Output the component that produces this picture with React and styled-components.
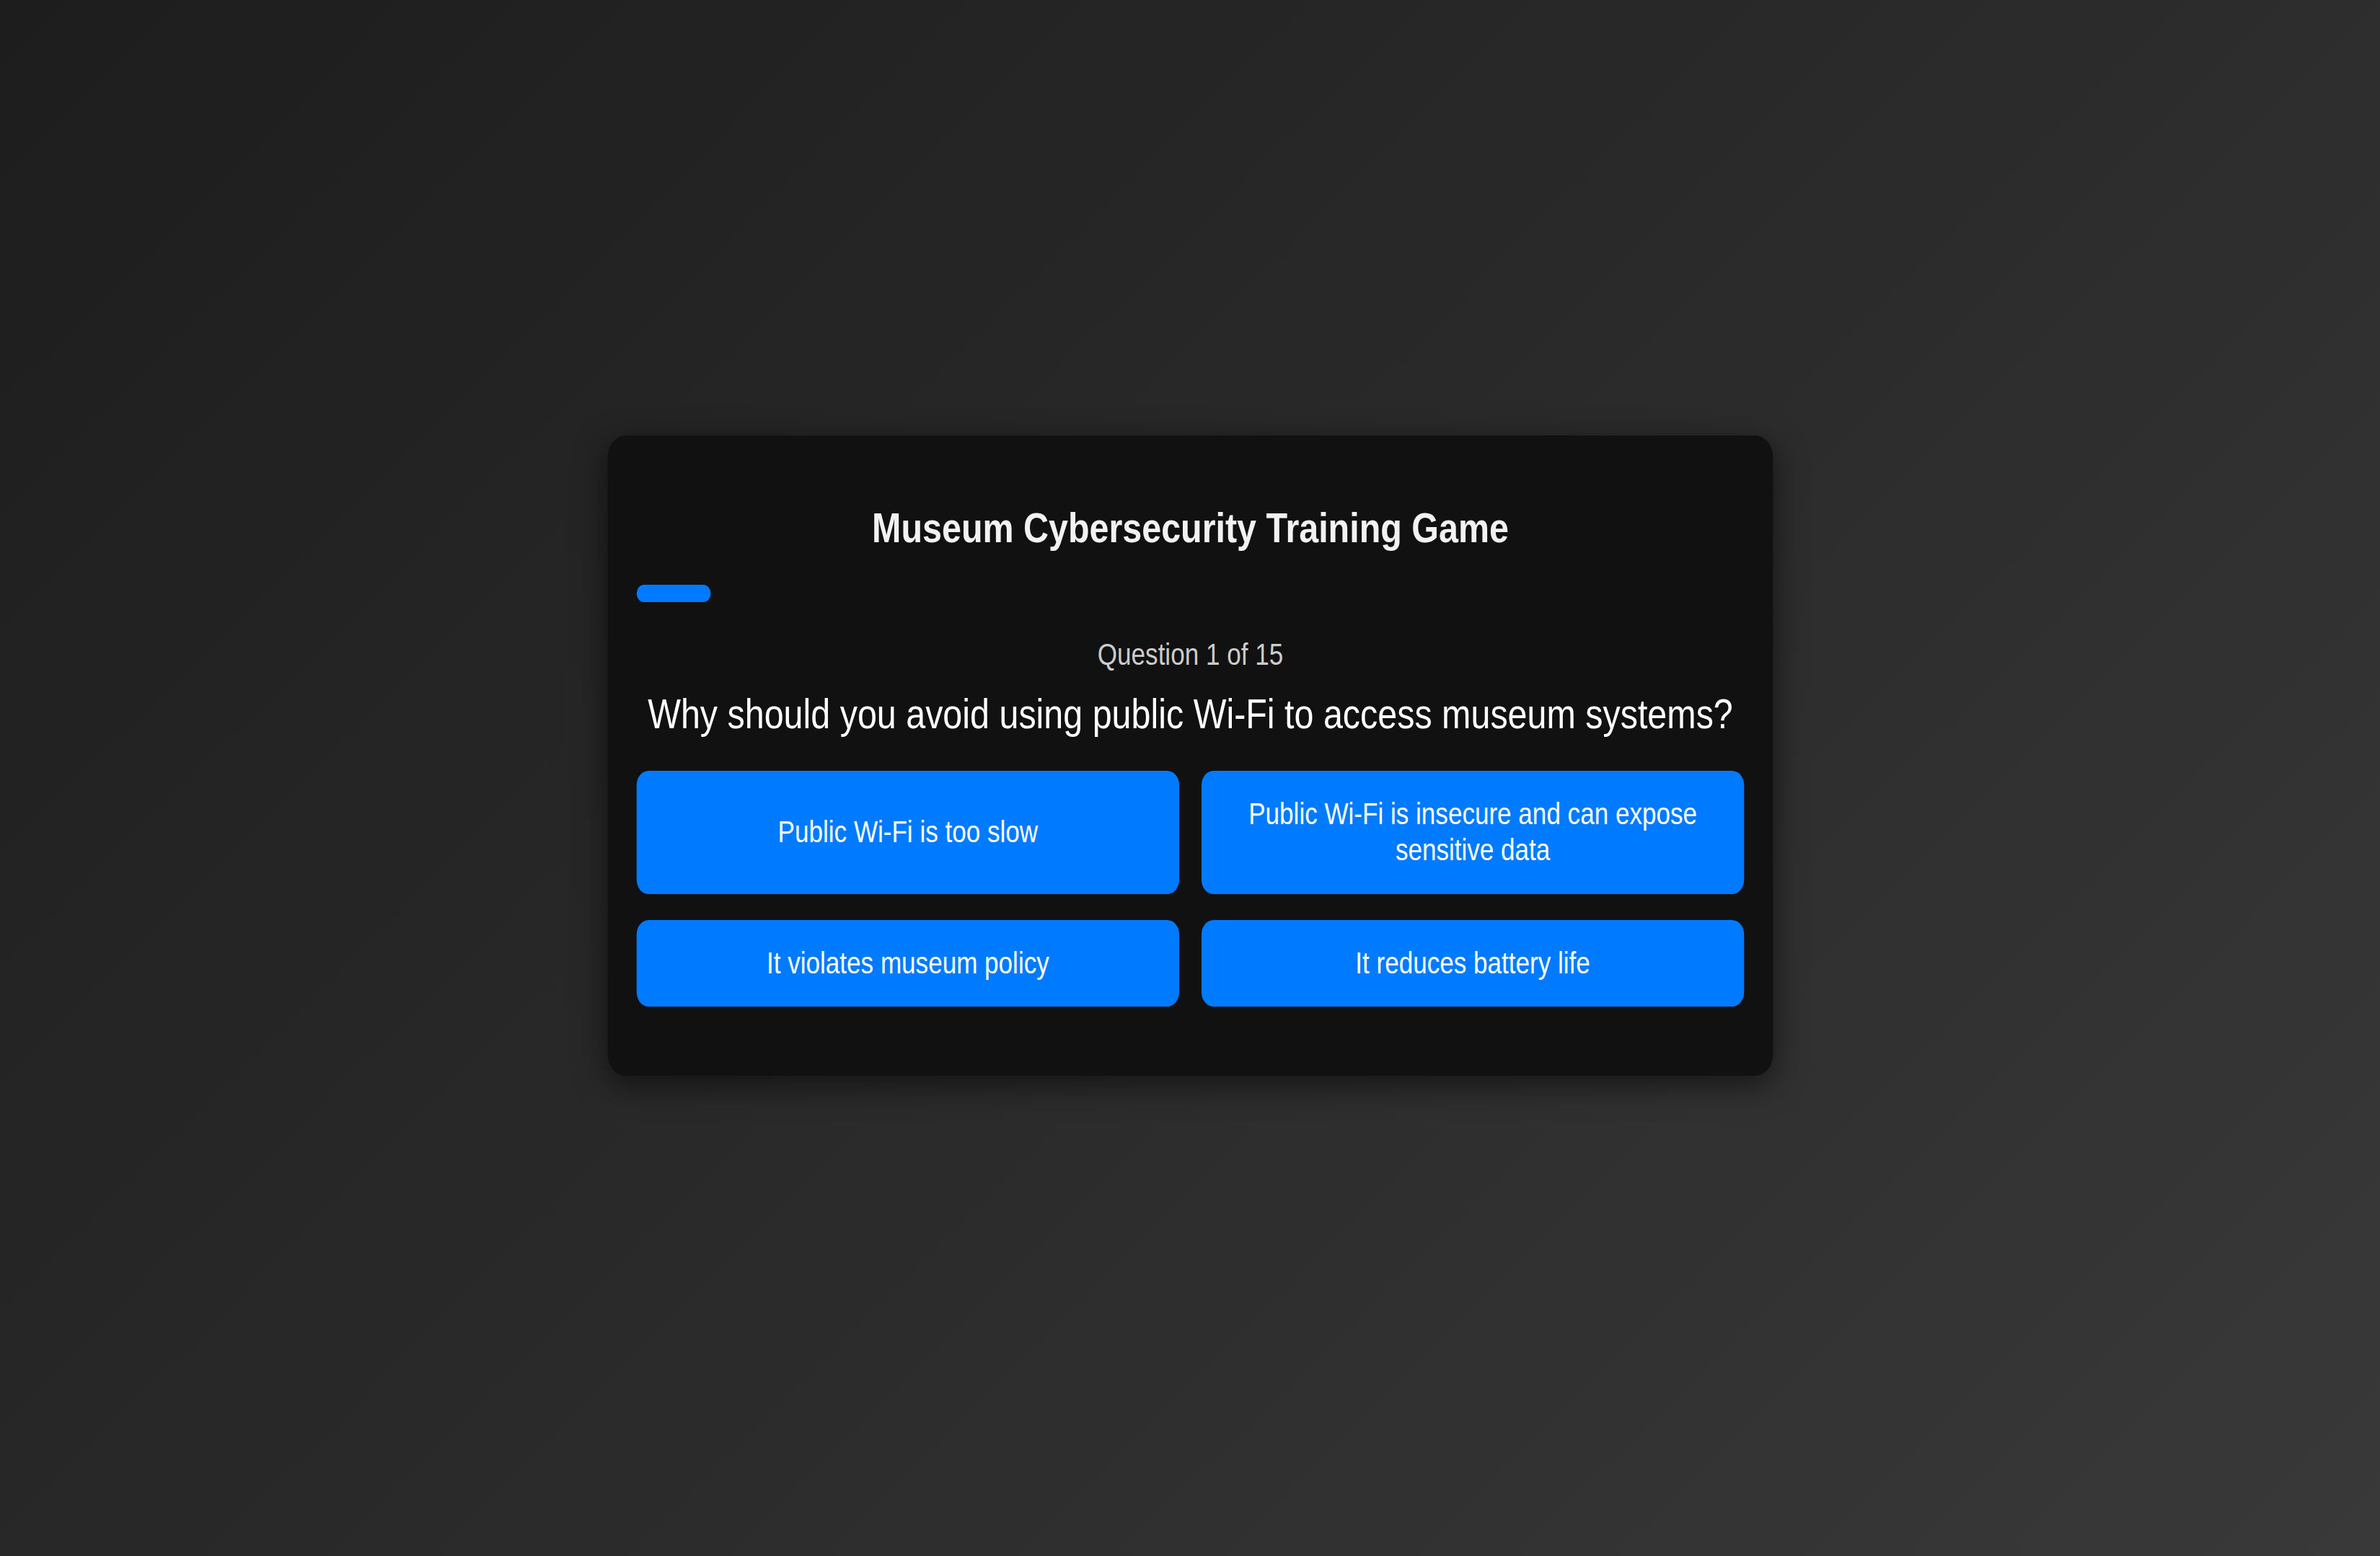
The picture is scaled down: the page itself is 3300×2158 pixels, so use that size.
import React from "react";
import styled, { createGlobalStyle } from "styled-components";

const GlobalStyle = createGlobalStyle`
  html, body {
    margin: 0;
    padding: 0;
  }
  body {
    font-family: "Liberation Sans", Arial, Helvetica, sans-serif;
    background: linear-gradient(135deg, #1d1d1d 0%, #2a2a2a 50%, #393939 100%);
    min-height: 100vh;
  }
`;

const Page = styled.div`
  min-height: 100vh;
  box-sizing: border-box;
  display: flex;
  align-items: center;
  justify-content: center;
  padding-bottom: 62px;
`;

// the screenshot is squeezed horizontally, so the card is too
const Card = styled.div`
  width: 1935px;
  flex-shrink: 0;
  box-sizing: border-box;
  background-color: #111111;
  border-radius: 30px;
  padding: 93px 48px 96px;
  box-shadow: 0 12px 48px rgba(0, 0, 0, 0.55);
  display: flex;
  flex-direction: column;
  transform: scaleX(0.835);
`;

const Title = styled.h1`
  margin: 0;
  font-size: 58px;
  line-height: 1.2;
  font-weight: 700;
  color: #f2f2f2;
  text-align: center;
`;

const ProgressTrack = styled.div`
  margin-top: 45px;
  height: 24px;
  border-radius: 12px;
  background-color: transparent;
`;

const ProgressFill = styled.div`
  height: 100%;
  border-radius: 12px;
  background-color: #007bff;
`;

const Counter = styled.div`
  margin-top: 49px;
  font-size: 42px;
  line-height: 48px;
  color: #cccccc;
  text-align: center;
`;

const Question = styled.h2`
  margin: 23px 0 0;
  font-size: 58px;
  line-height: 1.2;
  font-weight: 400;
  color: #ffffff;
  text-align: center;
`;

const Options = styled.div`
  margin-top: 44px;
  display: grid;
  grid-template-columns: 1fr 1fr;
  column-gap: 37px;
  row-gap: 36px;
`;

const OptionButton = styled.button`
  font-family: inherit;
  font-size: 42px;
  line-height: 1.2;
  color: #ffffff;
  background-color: #007bff;
  border: none;
  border-radius: 20px;
  padding: 35px 24px;
  cursor: pointer;
  text-align: center;
  transition: background-color 0.3s;

  &:hover {
    background-color: #0069d9;
  }
`;

const quiz = {
  title: "Museum Cybersecurity Training Game",
  current: 1,
  total: 15,
  question: "Why should you avoid using public Wi-Fi to access museum systems?",
  options: [
    "Public Wi-Fi is too slow",
    "Public Wi-Fi is insecure and can expose sensitive data",
    "It violates museum policy",
    "It reduces battery life",
  ],
};

const App = () => {
  const progress = (quiz.current / quiz.total) * 100;

  return (
    <>
      <GlobalStyle />
      <Page>
        <Card>
          <Title>{quiz.title}</Title>
          <ProgressTrack>
            <ProgressFill style={{ width: `${progress}%` }} />
          </ProgressTrack>
          <Counter>
            Question {quiz.current} of {quiz.total}
          </Counter>
          <Question>{quiz.question}</Question>
          <Options>
            {quiz.options.map((opt) => (
              <OptionButton key={opt}>{opt}</OptionButton>
            ))}
          </Options>
        </Card>
      </Page>
    </>
  );
};

export default App;
